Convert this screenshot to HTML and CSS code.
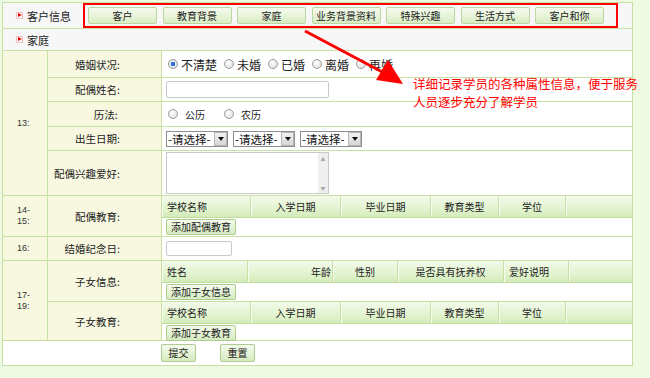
FILE: index.html
```html
<!DOCTYPE html>
<html lang="zh-CN">
<head>
    <meta charset="UTF-8">
    <title>客户信息 - 家庭</title>
    <link rel="stylesheet" href="styles.css">
</head>
<body>

<div class="page">
    <div class="panel">
        <div class="head-row">
            <div class="head-title"><span class="bullet"></span>客户信息</div>
            <div class="tabs">
                <button class="tab">客户</button>
                <button class="tab">教育背景</button>
                <button class="tab">家庭</button>
                <button class="tab">业务背景资料</button>
                <button class="tab">特殊兴趣</button>
                <button class="tab">生活方式</button>
                <button class="tab">客户和你</button>
            </div>
        </div>
        <div class="sub-row"><span class="bullet"></span>家庭</div>

        <div class="form-grid">
            <div class="num num-13">13:</div>
            <div class="label">婚姻状况:</div>
            <div class="value">
                <label class="radio big"><input type="radio" name="marry" checked>不清楚</label>
                <label class="radio big"><input type="radio" name="marry">未婚</label>
                <label class="radio big"><input type="radio" name="marry">已婚</label>
                <label class="radio big"><input type="radio" name="marry">离婚</label>
                <label class="radio big"><input type="radio" name="marry">再婚</label>
            </div>

            <div class="label">配偶姓名:</div>
            <div class="value"><input type="text" class="text-input wide"></div>

            <div class="label">历法:&nbsp;</div>
            <div class="value">
                <label class="radio loose"><input type="radio" name="calendar">公历</label>
                <label class="radio loose"><input type="radio" name="calendar">农历</label>
            </div>

            <div class="label">出生日期:</div>
            <div class="value selects">
                <span class="select"><span class="select-text">-请选择-</span><span class="select-btn"></span></span>
                <span class="select"><span class="select-text">-请选择-</span><span class="select-btn"></span></span>
                <span class="select"><span class="select-text">-请选择-</span><span class="select-btn"></span></span>
            </div>

            <div class="label">配偶兴趣爱好:</div>
            <div class="value top">
                <div class="textarea">
                    <div class="textarea-body"></div>
                    <div class="scrollbar"><span>&#9650;</span><span>&#9660;</span></div>
                </div>
            </div>

            <div class="num">14-15:</div>
            <div class="label">配偶教育:</div>
            <div class="value sub">
                <div class="sub-head edu-cols">
                    <div class="left">学校名称</div>
                    <div>入学日期</div>
                    <div>毕业日期</div>
                    <div>教育类型</div>
                    <div>学位</div>
                    <div></div>
                </div>
                <div class="sub-actions"><button class="small-btn">添加配偶教育</button></div>
            </div>

            <div class="num">16:</div>
            <div class="label">结婚纪念日:</div>
            <div class="value"><input type="text" class="text-input short"></div>

            <div class="num num-17">17-19:</div>
            <div class="label">子女信息:</div>
            <div class="value sub">
                <div class="sub-head child-cols">
                    <div class="left">姓名</div>
                    <div class="right">年龄</div>
                    <div>性别</div>
                    <div>是否具有抚养权</div>
                    <div class="left">爱好说明</div>
                    <div></div>
                </div>
                <div class="sub-actions"><button class="small-btn">添加子女信息</button></div>
            </div>

            <div class="label">子女教育:</div>
            <div class="value sub">
                <div class="sub-head edu-cols">
                    <div class="left">学校名称</div>
                    <div>入学日期</div>
                    <div>毕业日期</div>
                    <div>教育类型</div>
                    <div>学位</div>
                    <div></div>
                </div>
                <div class="sub-actions"><button class="small-btn">添加子女教育</button></div>
            </div>

            <div class="submit-row">
                <button class="small-btn submit">提交</button>
                <button class="small-btn submit">重置</button>
            </div>
        </div>
    </div>

    <!-- annotation over the page -->
    <svg class="callout-arrow" width="650" height="378" viewBox="0 0 650 378">
        <line x1="305" y1="31" x2="386" y2="74" stroke="#f00" stroke-width="3"/>
        <polygon points="403,84 376,80 388,60" fill="#f00"/>
    </svg>
    <div class="callout-text">
        <span>详细记录学员的各种属性信息，便于服务</span>
        <span>人员逐步充分了解学员</span>
    </div>
</div>

</body>
</html>
```

FILE: styles.css
```css
* {
    box-sizing: border-box;
}

body {
    margin: 0;
    background-color: #effae2;
    font-family: "Noto Sans CJK SC", "Liberation Sans", sans-serif;
    font-size: 10.5px;
    color: #222;
}

.page {
    position: relative;
    width: 650px;
    height: 378px;
    padding: 2px 0 0 2px;
}

.panel {
    width: 631px;
    border: 1px solid #c6e1a3;
    background: #fff;
}

/* header rows */
.head-row {
    display: flex;
    height: 26px;
    border-bottom: 1px solid #c6e1a3;
    background: #f7f7f7;
}

.head-title {
    display: flex;
    align-items: center;
    width: 80px;
    padding-left: 13px;
    font-size: 11px;
}

.bullet {
    display: inline-block;
    position: relative;
    width: 7px;
    height: 7px;
    margin-right: 4px;
    border: 1px solid #f2bfc8;
    background: #fff;
}

.bullet::after {
    content: "";
    position: absolute;
    left: 1px;
    top: 0;
    border-left: 4px solid #e00;
    border-top: 2.5px solid transparent;
    border-bottom: 2.5px solid transparent;
}

.tabs {
    display: flex;
    gap: 5.5px;
    width: 535px;
    height: 25px;
    padding: 2px 0 0 3px;
    border: 2px solid #f00;
}

.tab {
    width: 69px;
    height: 17px;
    padding: 0;
    border: 1px solid #bcd8a0;
    border-radius: 2px;
    background: linear-gradient(#f6fbef, #d9edc4);
    font-family: inherit;
    font-size: 10px;
    color: #222;
}

.sub-row {
    display: flex;
    align-items: center;
    height: 22px;
    padding-left: 13px;
    border-bottom: 1px solid #c6e1a3;
    background: #f7f7f7;
    font-size: 11px;
}

/* form table */
.form-grid {
    display: grid;
    grid-template-columns: 45px 114px 1fr;
    grid-template-rows: 27px 24px 25px 24px 45px 41px 24px 41px 39px 24px;
}

.form-grid > div {
    border-right: 1px solid #c6e1a3;
    border-bottom: 1px solid #c6e1a3;
}

.form-grid > .value,
.form-grid > .submit-row {
    border-right: none;
}

.num {
    display: flex;
    align-items: center;
    padding: 0 12px 0 14px;
    background: #f8f8e1;
    font-family: "Liberation Sans", sans-serif;
    font-size: 9px;
    line-height: 11px;
    color: #333;
}

.num-13 {
    grid-row: 1 / 6;
}

.num-17 {
    grid-row: 8 / 10;
}

.label {
    display: flex;
    align-items: center;
    justify-content: flex-end;
    padding-right: 41px;
    background: #f8f8e1;
}

.value {
    display: flex;
    align-items: center;
    padding-left: 4px;
}

.value.top {
    align-items: flex-start;
    padding-top: 1px;
}

.radio {
    display: flex;
    align-items: center;
    font-size: 10px;
}

.radio.big {
    margin-right: 5px;
    font-size: 12px;
}

.radio.loose {
    margin-right: 17px;
}

.radio input {
    appearance: none;
    width: 10px;
    height: 10px;
    margin: 0 3px 0 2px;
    border: 1px solid #9c9c9c;
    border-radius: 50%;
    background: radial-gradient(circle at 40% 35%, #fff, #d8d8d8);
}

.radio.loose input {
    margin-right: 7px;
}

.radio input:checked {
    background: radial-gradient(circle, #2f6fd0 0 2px, #e8eef8 2.5px, #cfcfcf);
}

.text-input {
    height: 17px;
    border: 1px solid #c9c9c9;
    border-radius: 2px;
    background: #fff;
}

.text-input.wide {
    width: 163px;
}

.text-input.short {
    width: 66px;
    height: 15px;
}

.selects {
    gap: 5px;
}

.select {
    display: flex;
    align-items: center;
    width: 62px;
    height: 16px;
    border: 1px solid #8e8e8e;
    background: #fff;
}

.select-text {
    flex: 1;
    padding-left: 1px;
    font-size: 11.5px;
    line-height: 14px;
    color: #111;
    white-space: nowrap;
}

.select-btn {
    display: flex;
    align-items: center;
    justify-content: center;
    width: 13px;
    height: 14px;
    border: 1px solid #b7b7b7;
    background: linear-gradient(#f2f2f2, #d6d6d6);
}

.select-btn::after {
    content: "";
    border-top: 4px solid #111;
    border-left: 3.5px solid transparent;
    border-right: 3.5px solid transparent;
}

.textarea {
    display: flex;
    width: 163px;
    height: 42px;
    border: 1px solid #c9c9c9;
    background: #fff;
}

.textarea-body {
    flex: 1;
}

.scrollbar {
    display: flex;
    flex-direction: column;
    justify-content: space-between;
    width: 10px;
    padding: 2px 0;
    background: #efefef;
    font-size: 5px;
    color: #a8a8a8;
    text-align: center;
}

/* sub tables */
.value.sub {
    display: block;
    padding-left: 0;
}

.sub-head {
    display: grid;
    height: 22px;
    border-bottom: 1px solid #c0dd9c;
    background: linear-gradient(#f3faea, #dff2cb 70%, #d3ebb8);
    font-size: 10px;
}

.sub-head > div {
    display: flex;
    align-items: center;
    justify-content: center;
    border-right: 1px solid #c6e1a3;
    box-shadow: inset 1px 0 0 #f7fcf0;
}

.sub-head > div:last-child {
    border-right: none;
}

.sub-head > .left {
    justify-content: flex-start;
    padding-left: 5px;
}

.sub-head > .right {
    justify-content: flex-end;
    padding-right: 1px;
}

.edu-cols {
    grid-template-columns: 89px 90px 90px 68px 67px 1fr;
}

.child-cols {
    grid-template-columns: 86px 85px 65px 106px 65px 1fr;
}

.sub-actions {
    padding: 1px 0 0 4px;
}

.small-btn {
    height: 16px;
    padding: 0 4px;
    border: 1px solid #adcc8f;
    border-radius: 2px;
    background: linear-gradient(#f4faec, #d6ebc0);
    font-family: inherit;
    font-size: 10px;
    line-height: 14px;
    color: #222;
}

.submit-row {
    grid-column: 1 / 4;
    display: flex;
    align-items: center;
    gap: 24px;
    padding-left: 158px;
    border-bottom: none !important;
}

.small-btn.submit {
    width: 35px;
    height: 18px;
    padding: 0;
}

/* annotation */
.callout-arrow {
    position: absolute;
    left: 0;
    top: 0;
    pointer-events: none;
}

.callout-text {
    position: absolute;
    left: 413px;
    top: 75px;
    font-size: 12.5px;
    line-height: 18px;
    color: #f00;
    white-space: nowrap;
}

.callout-text span {
    display: block;
}
```
